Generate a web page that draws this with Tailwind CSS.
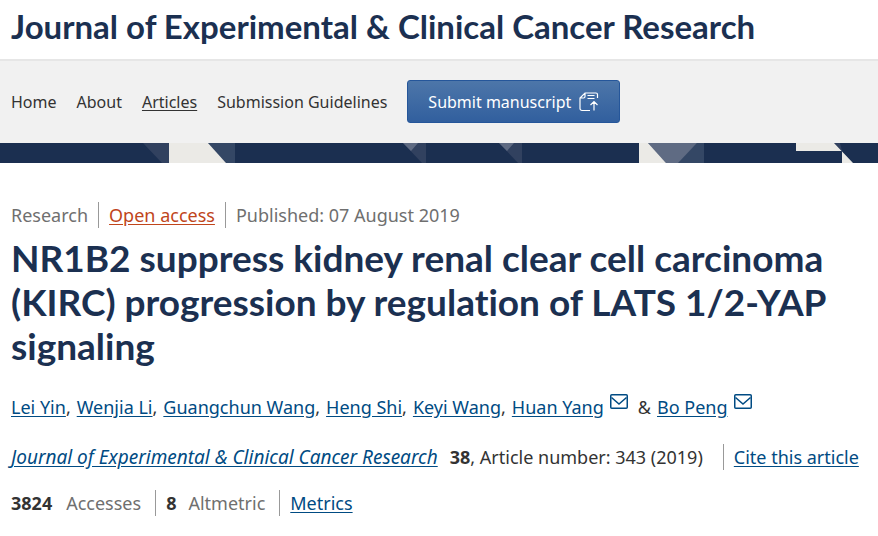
<!DOCTYPE html>
<html lang="en">
<head>
    <meta charset="UTF-8">
    <meta name="viewport" content="width=device-width, initial-scale=1.0">
    <title>NR1B2 suppress kidney renal clear cell carcinoma (KIRC) progression</title>
    <script src="https://cdn.jsdelivr.net/npm/@tailwindcss/browser@4"></script>
</head>
<body class="bg-white font-['Noto_Sans','Open_Sans',sans-serif] text-[#333]">
    <!-- Journal title -->
    <header>
        <div class="px-[11px] pt-[7px] pb-[13px] border-b-2 border-[#e6e6e6]">
            <p class="font-[Lato,sans-serif] font-bold text-[33px] leading-[39px] text-[#1b3051] whitespace-nowrap">Journal of Experimental &amp; Clinical Cancer Research</p>
        </div>

        <!-- Navigation -->
        <nav class="bg-[#f1f1f1] flex items-center px-[11px] pt-[19px] pb-5 text-base leading-6 whitespace-nowrap">
            <ul class="flex gap-5">
                <li><a href="#">Home</a></li>
                <li><a href="#">About</a></li>
                <li><a href="#" class="underline underline-offset-2">Articles</a></li>
                <li><a href="#">Submission Guidelines</a></li>
            </ul>
            <button type="button" class="ml-5 h-[43px] px-5 flex items-center gap-2 rounded-[3px] border border-[#25569a] bg-linear-to-b from-[#4d76a9] to-[#315f9e] text-white">
                Submit manuscript
                <svg class="h-5 w-5" viewBox="0 0 20 20" fill="none" stroke="currentColor" stroke-width="1.2" aria-hidden="true">
                    <path d="M11 18.500H3a2 2 0 0 1-2-2V6l5-5h11a1.500 1.500 0 0 1 1.500 1.500V6M1 6h3.500A1.500 1.500 0 0 0 6 4.500V1M8.500 3.500h7M8.500 6.500h7M15 18.500V10M11.500 13l3.500-3.500 3.500 3.500" />
                </svg>
            </button>
        </nav>
    </header>

    <!-- Banner pattern -->
    <div class="h-5 overflow-hidden bg-[#1b2f50]">
        <svg class="h-5 w-[878px]" viewBox="0 0 878 20" aria-hidden="true">
            <g fill="#31415f">
                <path d="M143 0h27v20h-8z" />
                <path d="M208 0h27v20h-9z" fill="#344765" />
                <path d="M403 0h23v20h-4z" />
                <path d="M499 0h23v20h-4z" />
                <path d="M697 0h7v20h-27z" fill="#344765" />
                <path d="M834 0h6l2 8z" />
            </g>
            <g fill="#5f6b83">
                <path d="M403 0h15l-7 8z" />
                <path d="M499 0h15l-7 8z" />
                <path d="M648 0h49l-19 20h-12z" />
            </g>
            <g fill="#ebeae6">
                <path d="M169 0h39l18 20h-57z" />
                <path d="M639 0h9l18 20h-27z" />
                <path d="M796 0h38l19 20h-11V8h-46z" />
            </g>
        </svg>
    </div>

    <main class="px-[11px] pt-[39px] text-[18px] leading-[26px] whitespace-nowrap">
        <ul class="flex text-[#6f6f6f]">
            <li class="pr-2.5">Research</li>
            <li class="border-l border-[#999] px-2.5"><a href="#" class="text-[#c0451b] underline underline-offset-2">Open access</a></li>
            <li class="border-l border-[#999] pl-2.5">Published: <time datetime="2019-08-07">07 August 2019</time></li>
        </ul>

        <h1 class="mt-2 font-[Lato,sans-serif] font-bold text-[37px] leading-[44px] [font-variant-ligatures:none] text-[#1b3051]">
            NR1B2 suppress kidney renal clear cell carcinoma<br>
            (KIRC) progression by regulation of LATS 1/2-YAP<br>
            signaling
        </h1>

        <!-- Authors -->
        <ul class="mt-[26px] flex gap-1.5">
            <li><a href="#" class="text-[#004b83] underline underline-offset-2">Lei Yin</a>,</li>
            <li><a href="#" class="text-[#004b83] underline underline-offset-2">Wenjia Li</a>,</li>
            <li><a href="#" class="text-[#004b83] underline underline-offset-2">Guangchun Wang</a>,</li>
            <li><a href="#" class="text-[#004b83] underline underline-offset-2">Heng Shi</a>,</li>
            <li><a href="#" class="text-[#004b83] underline underline-offset-2">Keyi Wang</a>,</li>
            <li class="flex gap-1.5 pr-1">
                <a href="#" class="text-[#004b83] underline underline-offset-2">Huan Yang</a>
                <svg class="h-4 w-[18px] text-[#004b83]" viewBox="0 0 18 16" fill="none" stroke="currentColor" stroke-width="1.500" aria-hidden="true">
                    <rect x="0.750" y="0.750" width="16.500" height="13.500" rx="1" />
                    <path d="M1.500 3.500L9 10l7.500-6.500" />
                </svg>
            </li>
            <li class="flex gap-1.5">
                &amp;
                <a href="#" class="text-[#004b83] underline underline-offset-2">Bo Peng</a>
                <svg class="h-4 w-[18px] text-[#004b83]" viewBox="0 0 18 16" fill="none" stroke="currentColor" stroke-width="1.500" aria-hidden="true">
                    <rect x="0.750" y="0.750" width="16.500" height="13.500" rx="1" />
                    <path d="M1.500 3.500L9 10l7.500-6.500" />
                </svg>
            </li>
        </ul>

        <p class="mt-6 flex">
            <a href="#" class="text-[19px] italic text-[#004b83] underline underline-offset-2">Journal of Experimental &amp; Clinical Cancer Research</a>
            <span class="ml-3 pr-5"><b>38</b>, Article number: 343 (2019)</span>
            <span class="border-l border-[#999] pl-2.5"><a href="#" class="text-[#004b83] underline underline-offset-2">Cite this article</a></span>
        </p>

        <ul class="mt-5 flex text-[#6f6f6f]">
            <li class="pr-3.5"><b class="mr-3.5 text-[#333]">3824</b>Accesses</li>
            <li class="border-l border-[#999] pl-2.5 pr-3.5"><b class="mr-3 text-[#333]">8</b>Altmetric</li>
            <li class="border-l border-[#999] pl-2.5"><a href="#" class="text-[#004b83] underline underline-offset-2">Metrics</a></li>
        </ul>
    </main>
</body>
</html>
